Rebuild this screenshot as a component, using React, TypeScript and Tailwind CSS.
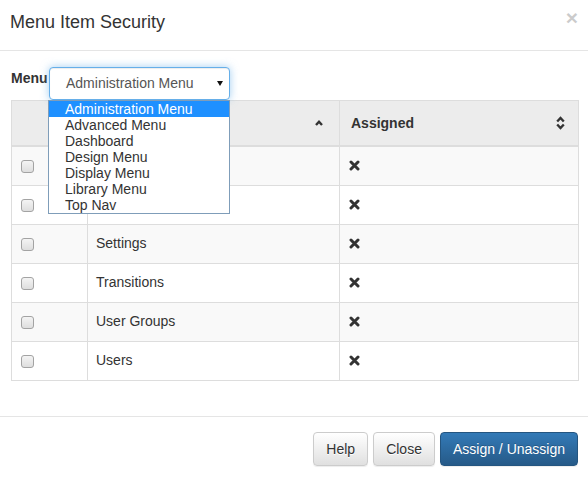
import React from "react";

// names of the first two rows are hidden under the open dropdown
const rows = [
  { name: "", assigned: false },
  { name: "", assigned: false },
  { name: "Settings", assigned: false },
  { name: "Transitions", assigned: false },
  { name: "User Groups", assigned: false },
  { name: "Users", assigned: false },
];

const menus = [
  "Administration Menu",
  "Advanced Menu",
  "Dashboard",
  "Design Menu",
  "Display Menu",
  "Library Menu",
  "Top Nav",
];

function RemoveIcon() {
  return (
    <svg width="11" height="11" viewBox="0 0 11 11" className="block">
      <path d="M2 2 L9 9 M9 2 L2 9" stroke="#333" strokeWidth="3" strokeLinecap="round" />
    </svg>
  );
}

function CaretUp() {
  return (
    <svg width="8" height="6" viewBox="0 0 8 6" className="block">
      <path d="M1 5 L4 1.8 L7 5" stroke="#333" strokeWidth="2.4" fill="none" />
    </svg>
  );
}

function SortIcon() {
  return (
    <svg width="9" height="14" viewBox="0 0 9 14" className="block">
      <path d="M1.2 5.5 L4.5 2 L7.8 5.5" stroke="#333" strokeWidth="2.4" fill="none" />
      <path d="M1.2 8.5 L4.5 12 L7.8 8.5" stroke="#333" strokeWidth="2.4" fill="none" />
    </svg>
  );
}

function Checkbox() {
  return (
    <input
      type="checkbox"
      className="appearance-none block w-[13px] h-[13px] rounded-[3px] border border-[#a3a3a3] bg-gradient-to-b from-[#f4f4f4] to-[#dedede]"
    />
  );
}

export default function App() {
  return (
    <div className="w-[588px] h-[477px] bg-white text-[#333] font-['Liberation_Sans',Arial,sans-serif] overflow-hidden">
      {/* header */}
      <div className="h-[51px] border-b border-[#e5e5e5] flex justify-between items-start pl-[10px] pr-[10px]">
        <h4 className="pt-[12px] text-[18px] leading-[20px]">Menu Item Security</h4>
        <button className="pt-[7px] text-[21px] leading-[21px] font-bold text-black opacity-20">×</button>
      </div>

      {/* body */}
      <div className="pl-[11px] pt-[16px] pb-[35px]">
        <div className="flex items-start">
          <label className="w-[38px] pt-[1px] text-[14px] leading-[20px] font-bold">Menu</label>
          <div className="relative">
            <div className="w-[181px] h-[33px] rounded-[4px] border border-[#66afe9] shadow-[inset_0_1px_1px_rgba(0,0,0,0.075),0_0_8px_rgba(102,175,233,0.6)] flex items-center justify-between pl-[16px] pr-[6px] bg-white">
              <span className="text-[14px] text-[#555]">Administration Menu</span>
              <svg width="6" height="5" viewBox="0 0 6 5" className="block">
                <path d="M0 0 H6 L3 5 Z" fill="#111" />
              </svg>
            </div>
            <ul className="absolute z-10 left-[-1px] top-[33px] w-[182px] h-[114px] border border-[#7f9db9] bg-white">
              {menus.map((m, i) => (
                <li
                  key={m}
                  className={
                    i === 0
                      ? "h-[16px] pl-[16px] text-[14px] leading-[16px] bg-[#1e90ff] text-white"
                      : "h-[16px] pl-[16px] text-[14px] leading-[16px] text-[#333]"
                  }
                >
                  {m}
                </li>
              ))}
            </ul>
          </div>
        </div>

        {/* table */}
        <div className="w-[568px] border-l border-t border-[#ddd] text-[14px]">
          <div className="flex h-[46px] bg-[#ececec] border-b-2 border-[#ddd]">
            <div className="w-[76px] border-r border-[#ddd]" />
            <div className="w-[252px] border-r border-[#ddd] flex items-center justify-end pl-[8px] pr-[16px]">
              <CaretUp />
            </div>
            <div className="w-[239px] border-r border-[#ddd] flex items-center justify-between pl-[11px] pr-[13px]">
              <span className="font-bold">Assigned</span>
              <SortIcon />
            </div>
          </div>
          {rows.map((r, i) => (
            <div
              key={i}
              className={
                i % 2 === 0
                  ? "flex h-[39px] border-b border-[#ddd] bg-[#f9f9f9]"
                  : "flex h-[39px] border-b border-[#ddd] bg-white"
              }
            >
              <div className="w-[76px] border-r border-[#ddd] flex items-center pl-[9px]">
                <Checkbox />
              </div>
              <div className="w-[252px] border-r border-[#ddd] flex items-center pl-[8px] pb-[1px]">{r.name}</div>
              <div className="w-[239px] border-r border-[#ddd] flex items-center pl-[9px] pb-[1px]">
                <RemoveIcon />
              </div>
            </div>
          ))}
        </div>
      </div>

      {/* footer */}
      <div className="border-t border-[#e5e5e5] pt-[15px] pr-[10px] flex justify-end gap-[5px]">
        <button className="h-[34px] px-[12px] rounded-[4px] border border-[#ccc] bg-gradient-to-b from-white to-[#e0e0e0] text-[14px] text-[#333] shadow-[0_1px_1px_rgba(0,0,0,0.075)] [text-shadow:0_1px_0_#fff]">
          Help
        </button>
        <button className="h-[34px] px-[12px] rounded-[4px] border border-[#ccc] bg-gradient-to-b from-white to-[#e0e0e0] text-[14px] text-[#333] shadow-[0_1px_1px_rgba(0,0,0,0.075)] [text-shadow:0_1px_0_#fff]">
          Close
        </button>
        <button className="h-[34px] px-[12px] rounded-[4px] border border-[#245580] bg-gradient-to-b from-[#337ab7] to-[#265a88] text-[14px] text-white shadow-[0_1px_1px_rgba(0,0,0,0.075)] [text-shadow:0_-1px_0_rgba(0,0,0,0.2)]">
          Assign / Unassign
        </button>
      </div>
    </div>
  );
}
